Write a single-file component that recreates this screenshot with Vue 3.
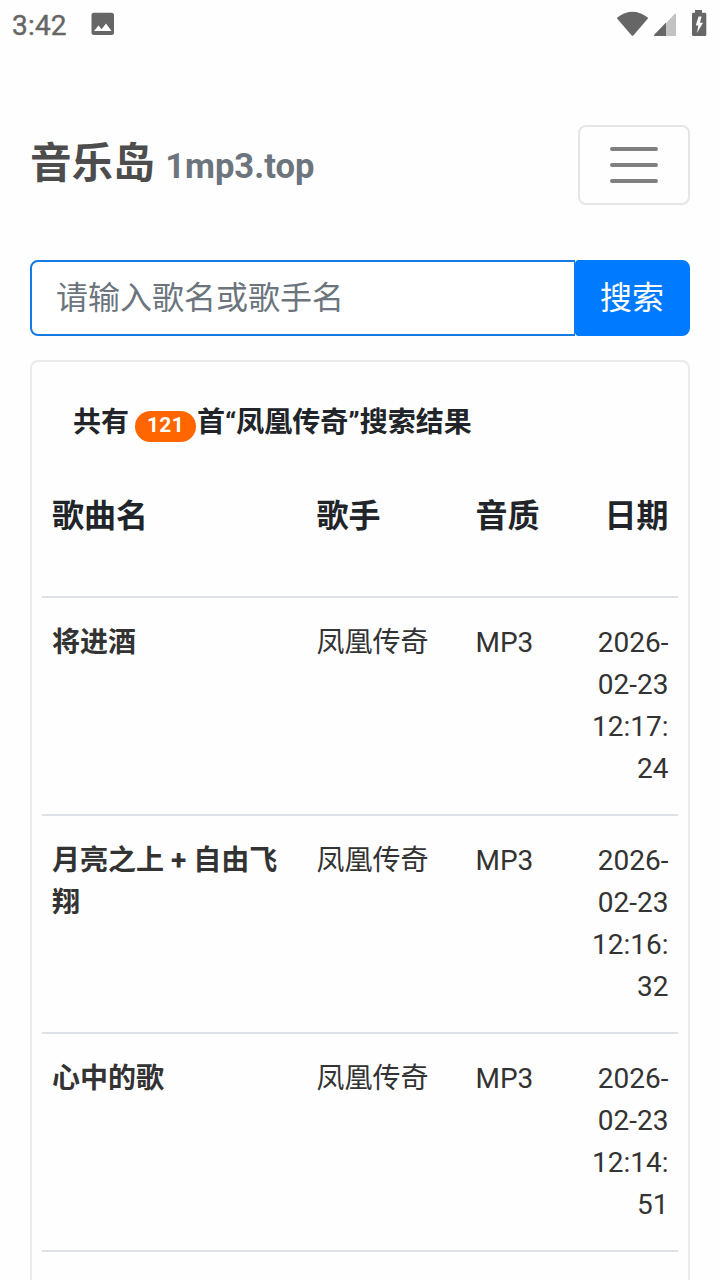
<script setup>
const songs = [
  { name: '将进酒', date: ['2026-', '02-23', '12:17:', '24'] },
  { name: '月亮之上 + 自由飞翔', date: ['2026-', '02-23', '12:16:', '32'] },
  { name: '心中的歌', date: ['2026-', '02-23', '12:14:', '51'] },
]
</script>

<template>
  <div class="screen">
    <div class="status">
      <span class="clock">3:42</span>
      <svg class="photo" width="24" height="24" viewBox="0 0 24 24">
        <path fill="#666" fill-rule="evenodd" d="M3 .7H20.500a2.500 2.500 0 0 1 2.500 2.500V20.500A2.500 2.500 0 0 1 20.500 23H3A2.500 2.500 0 0 1 .5 20.500V3.200A2.500 2.500 0 0 1 3 .7ZM3 19H20.500L15 11.500L10.600 17.200L7.500 13.400Z" />
      </svg>
      <svg class="signals" width="92" height="30" viewBox="0 0 92 30">
        <path fill="#666" d="M1.300 7.500Q16.500-4 31.700 7.500Q32.300 8 31.700 8.800L17.500 25.300Q16.500 26.300 15.500 25.300L1.300 8.800Q.7 8 1.300 7.500Z" />
        <path fill="#c2c2c2" d="M60 4.500V25.500q0 .5-.5 .5H38.500L58.500 4Q60 2.800 60 4.500Z" />
        <path fill="#666" d="M50 12.500V26H38.500Q37.500 25.500 38.200 24.700Z" />
        <path fill="#666" fill-rule="evenodd" d="M79 0h7v2.700h3q1.300 0 1.300 1.300V24.700q0 1.300-1.300 1.300H77.300q-1.300 0-1.300-1.300V4q0-1.300 1.300-1.300H79ZM85.500 6.500H82.500L79.800 15.400H82.300L81 23L87 12.700H84Z" />
      </svg>
    </div>

    <header class="nav">
      <a class="brand">音乐岛 <small>1mp3.top</small></a>
      <button class="toggler" aria-label="菜单">
        <svg width="60" height="60" viewBox="0 0 30 30">
          <path stroke="#808080" stroke-width="2" stroke-linecap="round" d="M4 7h22M4 15h22M4 23h22" />
        </svg>
      </button>
    </header>

    <form class="search" @submit.prevent>
      <input type="text" placeholder="请输入歌名或歌手名" />
      <button type="submit">搜索</button>
    </form>

    <section class="card">
      <h1 class="summary">共有 <span class="badge">121</span>首“凤凰传奇”搜索结果</h1>
      <div class="row head">
        <span>歌曲名</span><span>歌手</span><span>音质</span><span class="date">日期</span>
      </div>
      <div v-for="song in songs" :key="song.name" class="row">
        <a class="name">{{ song.name }}</a>
        <span>凤凰传奇</span>
        <span>MP3</span>
        <span class="date"><span v-for="part in song.date" :key="part">{{ part }}</span></span>
      </div>
      <div class="row"></div>
    </section>
  </div>
</template>

<style>
body {
  margin: 0;
  background: #fefefe;
}
</style>

<style scoped>
.screen {
  box-sizing: border-box;
  height: 1280px;
  overflow: hidden;
  font-family: Roboto, "Noto Sans CJK SC", sans-serif;
  color: #212529;
  background: #fefefe;
}
.status {
  display: flex;
  align-items: center;
  box-sizing: border-box;
  height: 48px;
  padding: 2px 12px 0;
  color: #666;
}
.clock {
  width: 55px;
  padding-top: 2px;
  font-size: 28px;
  line-height: 46px;
  letter-spacing: 0.2px;
  font-weight: 400;
  -webkit-text-stroke: 0.4px #666;
}
.photo {
  margin: -2px 0 0 24px;
}
.signals {
  margin: 0 0 0 auto;
}
.nav {
  display: flex;
  justify-content: space-between;
  align-items: center;
  height: 80px;
  margin: 77px 30px 0;
}
.brand {
  font-size: 41.600px;
  line-height: 60px;
  font-weight: 700;
  color: #4d4d4d;
  white-space: nowrap;
}
.brand small {
  font-size: 34.600px;
  color: #6c757d;
}
.toggler {
  display: flex;
  align-items: center;
  justify-content: center;
  box-sizing: border-box;
  width: 112px;
  height: 80px;
  padding: 0;
  border: 2px solid #e5e5e5;
  border-radius: 8px;
  background: transparent;
}
.search {
  display: flex;
  height: 76px;
  margin: 55px 30px 24px;
}
.search input {
  flex: 1;
  min-width: 0;
  box-sizing: border-box;
  height: 76px;
  padding: 0 24px;
  border: 2px solid #147be5;
  border-right-width: 1px;
  border-radius: 8px 0 0 8px;
  outline: 0;
  font: 400 32px/48px Roboto, "Noto Sans CJK SC", sans-serif;
  background: #fff;
}
.search input::placeholder {
  color: #6c757d;
  opacity: 1;
}
.search button {
  width: 115px;
  height: 76px;
  padding: 0 1px 0 0;
  border: 0;
  border-radius: 4px 8px 8px 4px;
  font: 400 32px/48px Roboto, "Noto Sans CJK SC", sans-serif;
  color: #fff;
  background: #007bff;
}
.card {
  box-sizing: border-box;
  height: 960px;
  margin: 0 30px;
  padding: 0 10px;
  border: 2px solid #ebebeb;
  border-radius: 8px;
}
.summary {
  margin: 40px 0 0 31px;
  font-size: 28px;
  line-height: 42px;
  font-weight: 700;
  white-space: nowrap;
}
.badge {
  display: inline-block;
  box-sizing: border-box;
  width: 61px;
  height: 31px;
  margin: 0 1px 0 -1px;
  border-radius: 16px;
  font-size: 21px;
  line-height: 28px;
  letter-spacing: 0.3px;
  text-align: center;
  color: #fff;
  background: #ff6600;
}
.row {
  display: grid;
  grid-template-columns: 264.500px 159px 106px 106.500px;
  align-items: start;
  box-sizing: border-box;
  height: 218px;
  padding-top: 24px;
  border-top: 2px solid #dee2e6;
  font-size: 28px;
  line-height: 42px;
  color: #333;
}
.row > * {
  padding: 0 10px;
}
.head {
  height: 152px;
  padding-top: 48px;
  border-top: 0;
  font-size: 32px;
  line-height: 48px;
  font-weight: 700;
  color: #212529;
}
.name {
  font-weight: 700;
}
.row .date {
  padding-right: 9.500px;
  text-align: right;
}
.date > span {
  display: block;
}
</style>
